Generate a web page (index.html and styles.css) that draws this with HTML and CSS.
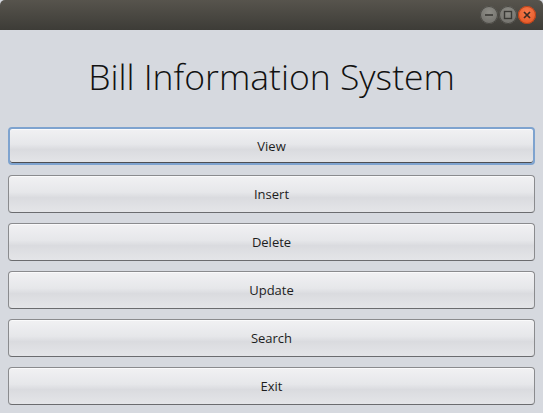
FILE: index.html
```html
<!DOCTYPE html>
<html>
<head>
<meta charset="utf-8">
<link rel="stylesheet" href="styles.css">
</head>
<body>
<div class="window">
  <div class="titlebar">
    <div class="controls">
      <span class="ctl min"><svg width="18" height="18" viewBox="0 0 18 18"><line x1="5" y1="9" x2="13" y2="9" stroke="#3a3935" stroke-width="1.6"/></svg></span>
      <span class="ctl max"><svg width="18" height="18" viewBox="0 0 18 18"><rect x="5.5" y="5.5" width="7" height="7" fill="none" stroke="#3a3935" stroke-width="1.4"/></svg></span>
      <span class="ctl close"><svg width="18" height="18" viewBox="0 0 18 18"><path d="M6 6 L12 12 M12 6 L6 12" stroke="#3b2a22" stroke-width="1.7"/></svg></span>
    </div>
  </div>
  <div class="content">
    <h1 class="title">Bill Information System</h1>
    <div class="buttons">
      <button class="btn focused">View</button>
      <button class="btn">Insert</button>
      <button class="btn">Delete</button>
      <button class="btn">Update</button>
      <button class="btn">Search</button>
      <button class="btn">Exit</button>
    </div>
  </div>
</div>
</body>
</html>
```
FILE: styles.css
```css
html, body {
  margin: 0;
  padding: 0;
  background: #ffffff;
}
.window {
  width: 543px;
  height: 413px;
  display: flex;
  flex-direction: column;
  background: #d6d9df;
  overflow: hidden;
}
.titlebar {
  height: 30px;
  flex: none;
  background: linear-gradient(#57544d, #3d3c37);
  border-radius: 5px 5px 0 0;
  display: flex;
  justify-content: flex-end;
  align-items: center;
  padding-right: 7px;
}
.controls {
  display: flex;
  gap: 1px;
}
.ctl {
  width: 18px;
  height: 18px;
  border-radius: 50%;
  display: flex;
  box-sizing: border-box;
}
.ctl.min, .ctl.max {
  background: radial-gradient(circle at 50% 35%, #8e8d87, #6a6964);
  box-shadow: inset 0 0 0 1px #4a4944;
}
.ctl.close {
  background: radial-gradient(circle at 50% 35%, #f77a4c, #e2501d);
  box-shadow: inset 0 0 0 1px #b3411a;
}
.content {
  flex: 1;
  display: flex;
  flex-direction: column;
  padding: 0 8px;
}
.title {
  margin: 22px 0 0 0;
  height: 75px;
  text-align: center;
  font-family: "Open Sans", sans-serif;
  font-weight: 300;
  font-size: 35.5px;
  line-height: 48px;
  color: #111;
}
.buttons {
  display: flex;
  flex-direction: column;
  gap: 10px;
}
.btn {
  height: 38px;
  box-sizing: border-box;
  border: 1px solid #8a8b8e;
  border-bottom-color: #6b6c6f;
  border-radius: 4px;
  background: linear-gradient(#f1f1f3 0%, #e6e7ea 45%, #dadbdf 60%, #e4e5e8 100%);
  font-family: "Open Sans", sans-serif;
  font-size: 13px;
  color: #1d1d1d;
  padding: 0;
  box-shadow: inset 0 1px 0 #fafafb;
}
.btn.focused {
  border: 2px solid #7ea3cf;
  box-shadow: inset 0 -1px 0 #4d4e52, inset 0 1px 0 #fafafb;
}
```
